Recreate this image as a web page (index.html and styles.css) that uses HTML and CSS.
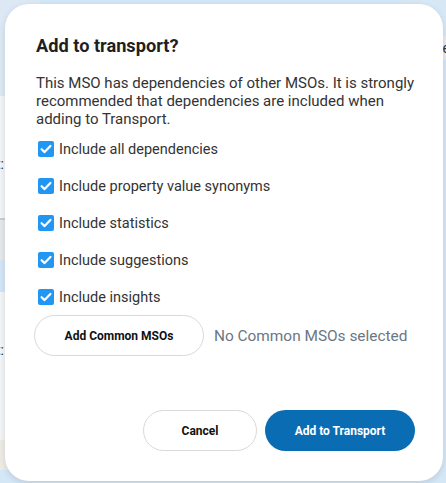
FILE: index.html
```html
<!DOCTYPE html>
<html lang="en">
<head>
<meta charset="utf-8">
<title>Add to transport?</title>
<link rel="stylesheet" href="styles.css">
</head>
<body>
<div class="backdrop">
  <div class="bd-left">
    <div class="bd-top"></div>
    <div class="bd-panel"><span class="bd-text">t:</span></div>
    <div class="bd-grey"></div>
    <div class="bd-blue"></div>
    <div class="bd-panel2"><span class="bd-text">t:</span></div>
    <div class="bd-beige"></div>
  </div>
  <div class="bd-right">
    <div class="bd-rtop"></div>
    <div class="bd-rbar"><span class="bd-text">e</span></div>
  </div>
</div>

<div class="dialog" role="dialog" aria-labelledby="dlg-title">
  <h2 id="dlg-title" class="title">Add to transport?</h2>
  <p class="desc">This MSO has dependencies of other MSOs. It is strongly recommended that dependencies are included when adding to Transport.</p>

  <div class="options">
    <label class="option"><input type="checkbox" checked><span class="box"><svg viewBox="0 0 16 16"><path d="M3.6 8.2l3 2.9 5.8-6.2" /></svg></span><span>Include all dependencies</span></label>
    <label class="option"><input type="checkbox" checked><span class="box"><svg viewBox="0 0 16 16"><path d="M3.6 8.2l3 2.9 5.8-6.2" /></svg></span><span>Include property value synonyms</span></label>
    <label class="option"><input type="checkbox" checked><span class="box"><svg viewBox="0 0 16 16"><path d="M3.6 8.2l3 2.9 5.8-6.2" /></svg></span><span>Include statistics</span></label>
    <label class="option"><input type="checkbox" checked><span class="box"><svg viewBox="0 0 16 16"><path d="M3.6 8.2l3 2.9 5.8-6.2" /></svg></span><span>Include suggestions</span></label>
    <label class="option"><input type="checkbox" checked><span class="box"><svg viewBox="0 0 16 16"><path d="M3.6 8.2l3 2.9 5.8-6.2" /></svg></span><span>Include insights</span></label>
  </div>

  <div class="common">
    <button class="btn btn-outline btn-common">Add Common MSOs</button>
    <span class="common-note">No Common MSOs selected</span>
  </div>

  <div class="footer">
    <button class="btn btn-outline btn-cancel">Cancel</button>
    <button class="btn btn-primary">Add to Transport</button>
  </div>
</div>
</body>
</html>
```

FILE: styles.css
```css
* { box-sizing: border-box; }

html, body {
  margin: 0;
  padding: 0;
  width: 446px;
  height: 483px;
  overflow: hidden;
}

body {
  position: relative;
  font-family: Roboto, "Noto Sans", Arial, sans-serif;
  background: #d4e7f7;
}

/* blurred page behind the dialog */
.backdrop {
  display: flex;
  justify-content: space-between;
  height: 483px;
}
.bd-left {
  width: 40px;
  display: flex;
  flex-direction: column;
}
.bd-top { height: 96px; background: #dce9f4; }
.bd-panel { height: 122px; background: #f3f4f6; }
.bd-grey { height: 42px; background: #e6e7e9; border-top: 2px solid #c9cdd2; }
.bd-blue { height: 32px; background: #d3e6f6; }
.bd-panel2 { height: 148px; background: #f3f4f6; }
.bd-beige { height: 30px; background: #ecebe6; }
.bd-text {
  display: block;
  font-size: 14px;
  color: #333;
  margin-left: -4px;
}
.bd-panel .bd-text { padding-top: 60px; }
.bd-panel2 .bd-text { padding-top: 50px; }

.bd-right { width: 40px; display: flex; flex-direction: column; }
.bd-rtop { height: 36px; background: #d6e8f6; }
.bd-rbar { height: 24px; background: #e9eaec; text-align: right; }
.bd-rbar .bd-text { margin-right: -4px; line-height: 24px; }

/* dialog */
.dialog {
  position: absolute;
  left: 5px;
  top: 4px;
  width: 438px;
  height: 477px;
  background: #fff;
  border-radius: 24px;
  box-shadow: 0 2px 6px rgba(0, 0, 0, 0.12);
  padding: 30px 28px 30px 31px;
  display: flex;
  flex-direction: column;
  color: #212121;
}

.title {
  margin: 0;
  font-size: 18.2px;
  line-height: 24px;
  font-weight: 700;
  color: #1f1f1f;
}

.desc {
  margin: 16px 0 0;
  font-size: 15px;
  line-height: 18px;
  color: #333;
}

.options {
  margin-top: 11px;
  display: flex;
  flex-direction: column;
  gap: 17px;
}

.option {
  display: flex;
  align-items: center;
  height: 20px;
  font-size: 14.5px;
  color: #333;
  cursor: pointer;
}
.option input { display: none; }
.box {
  width: 16px;
  height: 16px;
  margin-left: 2px;
  margin-right: 5px;
  border-radius: 2px;
  background: #2196f3;
  display: flex;
}
.box svg {
  width: 16px;
  height: 16px;
  fill: none;
  stroke: #fff;
  stroke-width: 2.2;
  stroke-linecap: round;
  stroke-linejoin: round;
}

.common {
  margin-top: 8px;
  margin-left: -2px;
  display: flex;
  align-items: center;
  gap: 10px;
}

.btn {
  height: 41px;
  border-radius: 21px;
  font-family: Roboto, "Noto Sans", Arial, sans-serif;
  font-size: 12px;
  font-weight: 700;
  cursor: pointer;
  padding: 0;
}
.btn-outline {
  background: #fff;
  border: 1px solid #d9d9d9;
  color: #111;
}
.btn-common { width: 170px; }
.common-note {
  font-size: 15.4px;
  color: #6b7683;
}

.footer {
  margin-top: auto;
  display: flex;
  justify-content: flex-end;
  gap: 8px;
}
.btn-cancel { width: 114px; }
.btn-primary {
  width: 150px;
  border: none;
  background: #0a6db4;
  color: #fff;
}
```
